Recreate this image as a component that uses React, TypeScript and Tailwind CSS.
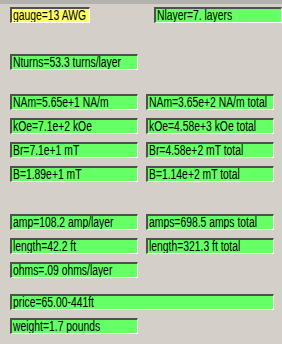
import React from "react";

function Field({ text, color = "bg-[#66ff66]", w = "w-[128px]" }: { text?: string; color?: string; w?: string }) {
  return (
    <div className={`${w} ${color} h-[16px] border-t-2 border-l-2 border-r border-b border-t-[#505050] border-l-[#505050] border-r-white border-b-white pl-[1px] text-[14px] leading-[13px] text-black whitespace-nowrap overflow-hidden`}>
      <span className="inline-block origin-left scale-x-[0.74]">{text}</span>
    </div>
  );
}

export default function App() {
  return (
    <div className="w-[282px] h-[344px] bg-[#d4d0c8] overflow-hidden" style={{ fontFamily: '"Liberation Sans", Arial, sans-serif' }}>
      <div className="h-[4px] bg-[#b4b2ae]" />
      <div className="pl-[10px] pt-[3px] flex flex-col">
        <div className="flex gap-[8px]">
          <Field text="gauge=13 AWG" color="bg-[#ffff66]" w="w-[80px]" />
          <div className="w-[48px]" />
          <Field text="Nlayer=7. layers" />
        </div>
        <div className="mt-[31px]">
          <Field text="Nturns=53.3 turns/layer" />
        </div>
        <div className="mt-[24px] grid grid-cols-[128px_128px] gap-x-[8px] gap-y-[8px]">
          <Field text="NAm=5.65e+1 NA/m" />
          <Field text="NAm=3.65e+2 NA/m total" />
          <Field text="kOe=7.1e+2 kOe" />
          <Field text="kOe=4.58e+3 kOe total" />
          <Field text="Br=7.1e+1 mT" />
          <Field text="Br=4.58e+2 mT total" />
          <Field text="B=1.89e+1 mT" />
          <Field text="B=1.14e+2 mT total" />
        </div>
        <div className="mt-[32px] grid grid-cols-[128px_128px] gap-x-[8px] gap-y-[8px]">
          <Field text="amp=108.2 amp/layer" />
          <Field text="amps=698.5 amps total" />
          <Field text="length=42.2 ft" />
          <Field text="length=321.3 ft total" />
          <Field text="ohms=.09 ohms/layer" />
        </div>
        <div className="mt-[16px] flex flex-col gap-[8px]">
          <Field text="price=65.00-441ft" w="w-[264px]" />
          <Field text="weight=1.7 pounds" />
        </div>
      </div>
    </div>
  );
}
